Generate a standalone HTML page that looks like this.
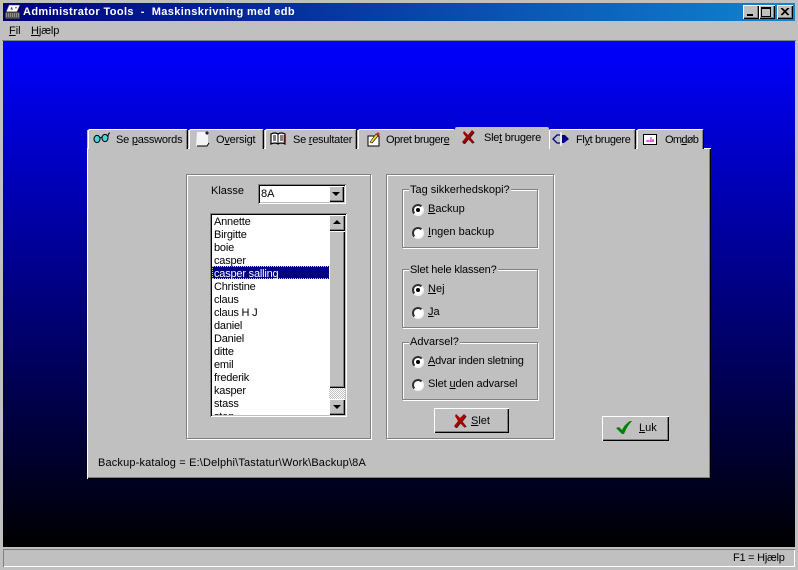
<!DOCTYPE html>
<html><head><meta charset="utf-8"><style>
html,body{margin:0;padding:0;width:798px;height:570px;overflow:hidden;background:#c0c0c0}
body{position:relative;font:11px/13px "Liberation Sans",sans-serif;color:#000}
div,svg{position:absolute;box-sizing:border-box}
.t{white-space:pre;line-height:13px;height:13px;transform:translateY(1px)}
.raised{background:#c0c0c0;box-shadow:inset 1px 1px 0 #fff,inset -1px -1px 0 #000,inset -2px -2px 0 #808080}
.sunken{box-shadow:inset 1px 1px 0 #808080,inset -1px -1px 0 #fff,inset 2px 2px 0 #000,inset -2px -2px 0 #c0c0c0}
.etch{border:1px solid #808080;box-shadow:inset 1px 1px 0 #fff,1px 1px 0 #fff}
.tab{background:#c0c0c0;top:129px;height:20px;border-top:1px solid #fff;border-left:1px solid #fff;border-right:1px solid #000;box-shadow:inset -1px 0 0 #808080;border-radius:2px 2px 0 0}
.leg{background:#c0c0c0;padding:0 1px}
.radio{width:12px;height:12px;border-radius:50%;background:linear-gradient(135deg,#303030 50%,#f4f4f4 50%)}
.radio b{position:absolute;left:2px;top:2px;width:8px;height:8px;border-radius:50%;background:#fff}
.radio i{position:absolute;left:4px;top:4px;width:4px;height:4px;border-radius:50%;background:#000}
</style></head><body>
<!-- title bar -->
<div style="left:3px;top:3px;width:792px;height:18px;background:linear-gradient(90deg,#000080,#1084d0)"></div>
<svg style="left:4px;top:4px" width="18" height="16" viewBox="0 0 18 16"><path d="M5 1h11l-3 7H2z" fill="#fff" stroke="#444" stroke-width=".6"/><path d="M7 3l2 1-2 1zM11 3h2l-1 2z" fill="#d03030"/><path d="M6 5l2-1 1 2z" fill="#2040c0"/><rect x="1" y="8" width="15" height="7" fill="#555" stroke="#111" stroke-width=".6"/><path d="M2 10h13M2 12h13" stroke="#ccc" stroke-dasharray="1 1"/></svg>
<div class="t" style="left:23px;top:5px;color:#fff;font-weight:bold;letter-spacing:.38px">Administrator Tools  -  Maskinskrivning med edb</div>
<div class="raised" style="left:743px;top:5px;width:16px;height:14px"></div>
<div style="left:747px;top:14px;width:6px;height:2px;background:#000"></div>
<div class="raised" style="left:759px;top:5px;width:16px;height:14px"></div>
<div style="left:761px;top:7px;width:10px;height:10px;border:1px solid #000;border-top-width:2px"></div>
<div class="raised" style="left:777px;top:5px;width:16px;height:14px"></div>
<svg style="left:780px;top:8px" width="10" height="9"><path d="M1 0l7 7M2 0l7 7M8 0L1 7M9 0L2 7" stroke="#000" fill="none"/></svg>
<!-- menu -->
<div class="t" style="left:9px;top:24px"><u>F</u>il</div>
<div class="t" style="left:31px;top:24px;letter-spacing:-.1px"><u>H</u>jælp</div>
<!-- client -->
<div style="left:2px;top:40px;width:794px;height:1px;background:#808080"></div>
<div style="left:3px;top:41px;width:792px;height:506px;background:linear-gradient(180deg,#0000ff,#000)"></div>
<!-- panel -->
<div class="raised" style="left:87px;top:148px;width:624px;height:331px"></div>
<div style="left:87px;top:148px;width:623px;height:1px;background:#fff"></div>
<!-- tab backing -->
<div style="left:87px;top:130px;width:617px;height:19px;background:#c0c0c0"></div>
<div style="left:87px;top:148px;width:623px;height:1px;background:#fff"></div>
<!-- tabs -->
<div class="tab" style="left:88px;width:100px"></div>
<div class="tab" style="left:189px;width:75px"></div>
<div class="tab" style="left:265px;width:92px"></div>
<div class="tab" style="left:358px;width:97px;border-right:0;box-shadow:none"></div>
<div class="tab" style="left:549px;width:87px"></div>
<div class="tab" style="left:637px;width:67px"></div>
<div style="left:455px;top:127px;width:94px;height:23px;background:#c0c0c0;border-radius:2px 2px 0 0"></div>
<div class="t" style="left:116px;top:133px;letter-spacing:-.23px">Se <u>p</u>asswords</div>
<div class="t" style="left:216px;top:133px;letter-spacing:-.2px">O<u>v</u>ersigt</div>
<div class="t" style="left:293px;top:133px;letter-spacing:-.25px">Se <u>r</u>esultater</div>
<div class="t" style="left:386px;top:133px;letter-spacing:-.4px">Opret bruger<u>e</u></div>
<div class="t" style="left:484px;top:131px;letter-spacing:-.25px">Sle<u>t</u> brugere</div>
<div class="t" style="left:576px;top:133px;letter-spacing:-.35px">Fl<u>y</u>t brugere</div>
<div class="t" style="left:665px;top:133px;letter-spacing:-.7px">Om<u>d</u>øb</div>
<!-- tab icons -->
<svg style="left:93px;top:131px" width="18" height="13"><ellipse cx="4" cy="8" rx="3" ry="3.6" fill="#40d8d8" stroke="#000"/><ellipse cx="12" cy="7" rx="3" ry="3.6" fill="#40d8d8" stroke="#000"/><path d="M7 7l2-1M15 6q0-4 2-4" stroke="#000" fill="none"/></svg>
<svg style="left:196px;top:131px" width="15" height="17"><path d="M1 1h8l3 3v11H0z" fill="#f4f4f4"/><path d="M11 0l2 2-2 2-2-2z" fill="#222"/><path d="M1 15h10l2-3" stroke="#000" fill="none"/></svg>
<svg style="left:270px;top:132px" width="16" height="14"><path d="M1 2q4-2 7 0q3-2 7 0v10q-4-2-7 0q-3-2-7 0z" fill="#fff" stroke="#000" stroke-width="1.2"/><path d="M8 2v10M3 4h3M3 6h3M3 8h3M10 4h3M10 6h3M10 8h3" stroke="#000"/><path d="M14 3v8" stroke="#c03030"/></svg>
<svg style="left:367px;top:131px" width="14" height="16"><path d="M1 5h11v10H1z" fill="#fff" stroke="#000"/><path d="M3 11L9 3l2 2-6 7z" fill="#f0e020" stroke="#000" stroke-width=".6"/><path d="M9 3l2-2 2 2-2 2z" fill="#c03030"/></svg>
<svg style="left:461px;top:129px" width="15" height="15"><path d="M3 2l4 4 4-5 2 2-4 5 4 5-2 1-4-4-4 5-2-2 4-5-3-4z" fill="#202020" transform="translate(.6 .6)"/><path d="M3 2l4 4 4-5 2 2-4 5 4 5-2 1-4-4-4 5-2-2 4-5-3-4z" fill="#a00000"/></svg>
<svg style="left:552px;top:132px" width="18" height="14"><path d="M8 3H5L1 7l4 4h3" fill="none" stroke="#000080" stroke-width="1.3"/><path d="M10 3h3l4 4-5 4h-2z" fill="#000080"/><path d="M9 0v15" stroke="#fff" stroke-width="1.3"/></svg>
<svg style="left:643px;top:134px" width="14" height="11"><rect x=".5" y=".5" width="13" height="10" fill="#fff" stroke="#000"/><path d="M3 7h8M5 6v2M8 3v5M10 5v3" stroke="#d020d0"/></svg>
<!-- left group -->
<div class="etch" style="left:186px;top:174px;width:185px;height:265px"></div>
<div class="t" style="left:211px;top:184px">Klasse</div>
<div class="sunken" style="left:258px;top:184px;width:88px;height:20px;background:#fff"></div>
<div class="t" style="left:261px;top:187px">8A</div>
<div class="raised" style="left:329px;top:186px;width:15px;height:16px"></div>
<svg style="left:332px;top:192px" width="9" height="5"><path d="M0 0h8L4 4z" fill="#000"/></svg>
<div class="sunken" style="left:210px;top:213px;width:137px;height:204px;background:#fff"></div>
<div style="left:212px;top:215px;width:118px;height:200px;overflow:hidden;letter-spacing:-.2px">
<div style="left:0;top:51px;width:118px;height:13px;background:#000080;outline:1px dotted #ccc;outline-offset:-1px"></div>
<div class="t" style="left:2px;top:0">Annette</div>
<div class="t" style="left:2px;top:13px">Birgitte</div>
<div class="t" style="left:2px;top:26px">boie</div>
<div class="t" style="left:2px;top:39px">casper</div>
<div class="t" style="left:2px;top:52px;color:#fff">casper salling</div>
<div class="t" style="left:2px;top:65px">Christine</div>
<div class="t" style="left:2px;top:78px">claus</div>
<div class="t" style="left:2px;top:91px">claus H J</div>
<div class="t" style="left:2px;top:104px">daniel</div>
<div class="t" style="left:2px;top:117px">Daniel</div>
<div class="t" style="left:2px;top:130px">ditte</div>
<div class="t" style="left:2px;top:143px">emil</div>
<div class="t" style="left:2px;top:156px">frederik</div>
<div class="t" style="left:2px;top:169px">kasper</div>
<div class="t" style="left:2px;top:182px">stass</div>
<div class="t" style="left:2px;top:195px">sten</div>
</div>
<div style="left:329px;top:215px;width:16px;height:200px;background:repeating-conic-gradient(#fff 0 25%,#c0c0c0 0 50%) 0 0/2px 2px"></div>
<div class="raised" style="left:329px;top:215px;width:16px;height:16px"></div>
<svg style="left:333px;top:220px" width="9" height="5"><path d="M0 4h8L4 0z" fill="#000"/></svg>
<div class="raised" style="left:329px;top:231px;width:16px;height:157px"></div>
<div class="raised" style="left:329px;top:399px;width:16px;height:16px"></div>
<svg style="left:333px;top:405px" width="9" height="5"><path d="M0 0h8L4 4z" fill="#000"/></svg>
<div class="t" style="left:98px;top:456px;letter-spacing:.16px">Backup-katalog = E:\Delphi\Tastatur\Work\Backup\8A</div>
<!-- right group -->
<div class="etch" style="left:386px;top:174px;width:168px;height:265px"></div>
<div class="etch" style="left:402px;top:189px;width:136px;height:59px"></div>
<div class="t leg" style="left:409px;top:183px">Tag sikkerhedskopi?</div>
<div class="radio" style="left:412px;top:204px"><b></b><i></i></div>
<div class="t" style="left:428px;top:202px"><u>B</u>ackup</div>
<div class="radio" style="left:412px;top:227px"><b></b></div>
<div class="t" style="left:428px;top:225px"><u>I</u>ngen backup</div>
<div class="etch" style="left:402px;top:269px;width:136px;height:59px"></div>
<div class="t leg" style="left:409px;top:263px;letter-spacing:-.15px">Slet hele klassen?</div>
<div class="radio" style="left:412px;top:284px"><b></b><i></i></div>
<div class="t" style="left:428px;top:282px"><u>N</u>ej</div>
<div class="radio" style="left:412px;top:307px"><b></b></div>
<div class="t" style="left:428px;top:305px"><u>J</u>a</div>
<div class="etch" style="left:402px;top:342px;width:136px;height:58px"></div>
<div class="t leg" style="left:409px;top:335px">Advarsel?</div>
<div class="radio" style="left:412px;top:356px"><b></b><i></i></div>
<div class="t" style="left:428px;top:354px;letter-spacing:-.2px"><u>A</u>dvar inden sletning</div>
<div class="radio" style="left:412px;top:379px"><b></b></div>
<div class="t" style="left:428px;top:377px;letter-spacing:-.1px">Slet <u>u</u>den advarsel</div>
<!-- buttons -->
<div class="raised" style="left:434px;top:408px;width:75px;height:25px"></div>
<svg style="left:453px;top:413px" width="15" height="15"><path d="M3 1l4 4 4-4 2 2-4 5 4 5-2 1-4-4-4 5-2-2 4-5-3-5z" fill="#202020" transform="translate(.6 .6)"/><path d="M3 1l4 4 4-4 2 2-4 5 4 5-2 1-4-4-4 5-2-2 4-5-3-5z" fill="#b00000"/></svg>
<div class="t" style="left:471px;top:414px"><u>S</u>let</div>
<div class="raised" style="left:602px;top:416px;width:67px;height:25px"></div>
<svg style="left:615px;top:420px" width="18" height="15"><path d="M1 8l3-1 3 3q3-6 8-9h2q-5 5-8 13H7z" fill="#008000"/></svg>
<div class="t" style="left:639px;top:421px"><u>L</u>uk</div>
<!-- status -->
<div style="left:3px;top:549px;width:792px;height:18px;box-shadow:inset 1px 1px 0 #808080,inset -1px -1px 0 #fff"></div>
<div class="t" style="left:733px;top:551px;letter-spacing:-.25px">F1 = Hjælp</div>
</body></html>
